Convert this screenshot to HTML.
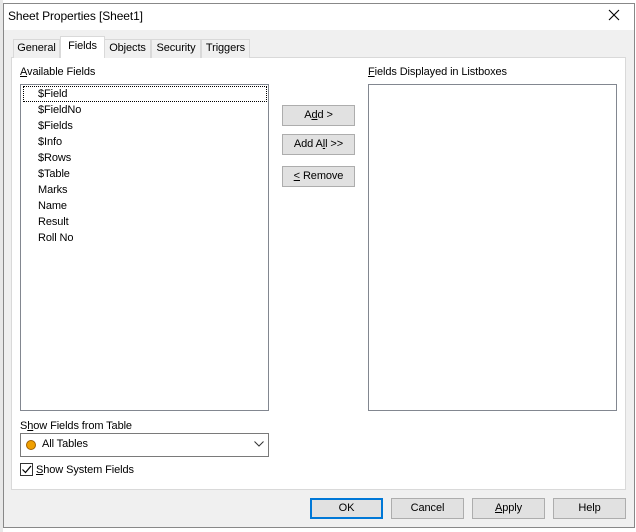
<!DOCTYPE html>
<html><head><style>
*{box-sizing:border-box;margin:0;padding:0}
body{width:636px;height:532px;background:#fff;font-family:"Liberation Sans",sans-serif;font-size:11px;letter-spacing:-0.1px;color:#000;position:relative;overflow:hidden}
.a{position:absolute}
.win{left:3px;top:3px;width:632px;height:525px;border:1px solid #888;background:#f0f0f0}
.title{left:4px;top:4px;width:630px;height:26px;background:#fff}
.tab{top:39px;height:19px;border:1px solid #d9d9d9;border-bottom:none;background:#f0f0f0;text-align:center;line-height:17px}
.panel{left:11px;top:57px;width:615px;height:433px;background:#fff;border:1px solid #d9d9d9}
.list{background:#fff;border:1px solid #828790}
.btn{background:#e1e1e1;border:1px solid #adadad;text-align:center;line-height:18px}
u{text-decoration:underline}
.it{left:38px;line-height:16px}
</style></head><body>
<div class="a" style="left:0;top:0;width:3px;height:532px;background:#e8e8e8"></div>
<div class="a win"></div>
<div class="a title"></div>
<div class="a" style="left:8px;top:9px;font-size:12px">Sheet Properties [Sheet1]</div>
<svg class="a" style="left:608px;top:9px" width="12" height="12"><path d="M1 1L11 11M11 1L1 11" stroke="#000" stroke-width="1.1"/></svg>
<div class="a panel"></div>
<div class="a tab" style="left:13px;width:47px">General</div>
<div class="a tab" style="left:104px;width:47px">Objects</div>
<div class="a tab" style="left:151px;width:50px">Security</div>
<div class="a tab" style="left:201px;width:49px">Triggers</div>
<div class="a tab" style="left:60px;top:36px;width:45px;height:22px;background:#fff;line-height:19px">Fields</div>
<div class="a" style="left:20px;top:66px"><u>A</u>vailable Fields</div>
<div class="a" style="left:368px;top:66px"><u>F</u>ields Displayed in Listboxes</div>
<div class="a list" style="left:20px;top:84px;width:249px;height:327px"></div>
<div class="a" style="left:23px;top:86px;width:244px;height:16px;border:1px dotted #000"></div>
<div class="a it" style="top:86px">$Field</div>
<div class="a it" style="top:102px">$FieldNo</div>
<div class="a it" style="top:118px">$Fields</div>
<div class="a it" style="top:134px">$Info</div>
<div class="a it" style="top:150px">$Rows</div>
<div class="a it" style="top:166px">$Table</div>
<div class="a it" style="top:182px">Marks</div>
<div class="a it" style="top:198px">Name</div>
<div class="a it" style="top:214px">Result</div>
<div class="a it" style="top:230px">Roll No</div>
<div class="a list" style="left:368px;top:84px;width:249px;height:327px"></div>
<div class="a btn" style="left:282px;top:105px;width:73px;height:21px">A<u>d</u>d &gt;</div>
<div class="a btn" style="left:282px;top:134px;width:73px;height:21px">Add A<u>l</u>l &gt;&gt;</div>
<div class="a btn" style="left:282px;top:166px;width:73px;height:21px"><u>&lt;</u> Remove</div>
<div class="a" style="left:20px;top:420px">S<u>h</u>ow Fields from Table</div>
<div class="a" style="left:20px;top:433px;width:249px;height:24px;border:1px solid #7a7a7a;background:#fff"></div>
<div class="a" style="left:26px;top:440px;width:10px;height:10px;border-radius:50%;background:#f0a000;border:1px solid #a06000"></div>
<div class="a" style="left:42px;top:438px">All Tables</div>
<svg class="a" style="left:254px;top:441px" width="10" height="6"><path d="M0.5 0.5L5 5L9.5 0.5" stroke="#333" fill="none"/></svg>
<div class="a" style="left:20px;top:463px;width:13px;height:13px;border:1px solid #333;background:#fff"></div>
<svg class="a" style="left:21px;top:464px" width="11" height="11"><path d="M1.5 5.5L4.5 8.5L10 2" stroke="#000" fill="none" stroke-width="1.2"/></svg>
<div class="a" style="left:36px;top:464px"><u>S</u>how System Fields</div>
<div class="a btn" style="left:310px;top:498px;width:73px;height:21px;border:2px solid #0078d7;line-height:17px">OK</div>
<div class="a btn" style="left:391px;top:498px;width:73px;height:21px">Cancel</div>
<div class="a btn" style="left:472px;top:498px;width:73px;height:21px"><u>A</u>pply</div>
<div class="a btn" style="left:553px;top:498px;width:73px;height:21px">Help</div>
</body></html>
